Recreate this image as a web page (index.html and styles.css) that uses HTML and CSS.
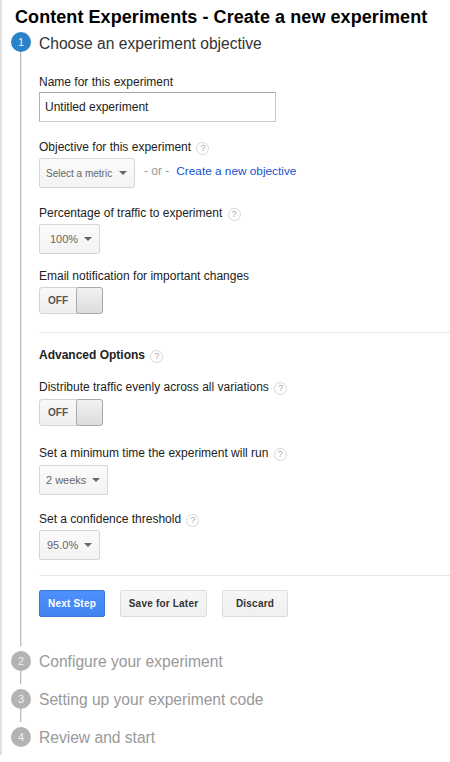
FILE: index.html
```html
<!DOCTYPE html>
<html lang="en">
<head>
<meta charset="utf-8">
<title>Content Experiments</title>
<link rel="stylesheet" href="styles.css">
</head>
<body>
<main class="page">
  <h1 class="title">Content Experiments - Create a new experiment</h1>
  <section class="step step-active">
    <div class="rail"><span class="num num-on">1</span><span class="line"></span></div>
    <div class="body">
      <h2 class="step-title">Choose an experiment objective</h2>
      <form class="form">
        <div class="field f-name">
          <label class="label">Name for this experiment</label>
          <input class="input" type="text" value="Untitled experiment">
        </div>
        <div class="field f-obj">
          <label class="label">Objective for this experiment <span class="help">?</span></label>
          <div class="row">
            <div class="select s-metric"><span>Select a metric</span><i class="caret"></i></div>
            <span class="or">- or -</span>
            <a class="link" href="#">Create a new objective</a>
          </div>
        </div>
        <div class="field f-pct">
          <label class="label">Percentage of traffic to experiment <span class="help">?</span></label>
          <div class="select s-pct"><span>100%</span><i class="caret"></i></div>
        </div>
        <div class="field f-email">
          <label class="label">Email notification for important changes</label>
          <div class="toggle"><span class="off">OFF</span><span class="knob"></span></div>
        </div>
        <hr class="rule rule-a">
        <h3 class="adv">Advanced Options <span class="help">?</span></h3>
        <div class="field f-dist">
          <label class="label">Distribute traffic evenly across all variations <span class="help">?</span></label>
          <div class="toggle"><span class="off">OFF</span><span class="knob"></span></div>
        </div>
        <div class="field f-min">
          <label class="label">Set a minimum time the experiment will run <span class="help">?</span></label>
          <div class="select s-weeks"><span>2 weeks</span><i class="caret"></i></div>
        </div>
        <div class="field f-conf">
          <label class="label">Set a confidence threshold <span class="help">?</span></label>
          <div class="select s-conf"><span>95.0%</span><i class="caret"></i></div>
        </div>
        <hr class="rule rule-b">
        <div class="buttons">
          <button class="btn btn-primary" type="button">Next Step</button>
          <button class="btn b-save" type="button">Save for Later</button>
          <button class="btn b-discard" type="button">Discard</button>
        </div>
      </form>
    </div>
  </section>
  <section class="step step-off">
    <div class="rail"><span class="num">2</span><span class="line"></span></div>
    <div class="body"><h2 class="step-title">Configure your experiment</h2></div>
  </section>
  <section class="step step-off">
    <div class="rail"><span class="num">3</span><span class="line"></span></div>
    <div class="body"><h2 class="step-title">Setting up your experiment code</h2></div>
  </section>
  <section class="step step-off">
    <div class="rail"><span class="num">4</span></div>
    <div class="body"><h2 class="step-title">Review and start</h2></div>
  </section>
</main>
</body>
</html>
```
FILE: styles.css
```css
* { box-sizing: border-box; }
html, body { margin: 0; padding: 0; background: #fff; }
body { font-family: "Liberation Sans", Arial, sans-serif; color: #222; width: 450px; height: 762px; overflow: hidden; }
.page { border-left: 2px solid #e2e2e2; height: 755px; padding-left: 9px; }
.title { margin: 0 0 0 4px; font-size: 18px; letter-spacing: 0.07px; line-height: 22px; padding-top: 6px; height: 32px; font-weight: bold; color: #000; }
.step { display: flex; }
.rail { width: 28px; flex: none; display: flex; flex-direction: column; align-items: flex-start; }
.num { width: 20px; height: 20px; border-radius: 50%; background: #b3b3b3; color: #f0f0f0; font-size: 11px; line-height: 20px; text-align: center; flex: none; }
.num-on { background: #2a82c8; color: #e6f1fa; }
.line { width: 1px; background: #bdbdbd; box-shadow: 1px 0 #e6e6e6; margin: 0 0 5px 9px; flex: 1; }
.body { flex: 1; min-width: 0; }
.step-title { margin: 0; font-size: 15.6px; line-height: 20px; font-weight: normal; padding-top: 1px; }
.step-active .step-title { color: #333; padding-top: 2px; }
.step-off { height: 38px; }
.step-off .step-title { color: #999; }
.label { display: block; font-size: 12px; line-height: 15px; color: #222; }
.f-name { padding-top: 21px; }
.f-obj { padding-top: 18px; }
.f-pct { padding-top: 18px; }
.f-email { padding-top: 15px; }
.f-dist { padding-top: 17px; }
.f-min { padding-top: 20px; }
.f-conf { padding-top: 17px; }
.input { display: block; width: 237px; height: 30px; margin-top: 2px; border: 1px solid #c8c8c8; border-top-color: #a4a4a4; border-left-color: #b0b0b0; padding: 0 5px; font: 12px "Liberation Sans", Arial, sans-serif; color: #222; background: #fff; border-radius: 0; }
.help { display: inline-block; width: 13px; height: 13px; margin-left: 2px; border: 1px solid #d8d8d8; border-radius: 50%; color: #aaa; font-size: 9px; font-weight: normal; line-height: 11px; text-align: center; vertical-align: 0; }
.row { display: flex; align-items: center; }
.row .or, .row .link { position: relative; top: -1px; }
.select { display: inline-flex; align-items: center; justify-content: space-between; height: 30px; margin-top: 3px; border: 1px solid #d6d6d6; border-radius: 2px; background: linear-gradient(#fbfbfb, #f3f3f3); color: #666; font-size: 11px; padding: 0 7px; }
.s-metric { width: 96px; padding-left: 6px; font-size: 10px; }
.s-pct { width: 61px; padding-left: 10px; }
.s-weeks { width: 69px; padding-left: 6px; margin-top: 4px; }
.s-conf { width: 61px; margin-top: 3px; }
.caret { width: 0; height: 0; border-left: 4px solid transparent; border-right: 4px solid transparent; border-top: 4px solid #666; flex: none; }
.or { margin-left: 9px; color: #999; font-size: 12px; }
.link { margin-left: 7px; color: #15c; text-decoration: none; font-size: 11.8px; }
.toggle { display: flex; width: 64px; height: 27px; margin-top: 3px; border: 1px solid #d2d2d2; border-radius: 3px; background: linear-gradient(#f8f8f8, #efefef); }
.f-dist .toggle { margin-top: 4px; }
.off { width: 36px; text-align: center; font-size: 10px; font-weight: bold; color: #555; line-height: 25px; }
.knob { flex: 1; margin: -1px -1px -1px 0; border: 1px solid #aaa; border-radius: 3px; background: linear-gradient(#f2f2f2, #dcdcdc); }
.rule { border: 0; margin: 0; height: 1px; background: #e8e8e8; }
.rule-a { margin-top: 18px; }
.adv { margin: 14px 0 0; font-size: 12px; line-height: 16px; font-weight: bold; color: #222; }
.rule-b { margin-top: 15px; }
.buttons { display: flex; gap: 15px; margin-top: 14px; height: 61px; }
.btn { height: 27px; font: bold 10px "Liberation Sans", Arial, sans-serif; letter-spacing: 0.2px; border: 1px solid #dcdcdc; border-radius: 2px; background: linear-gradient(#f6f6f6, #f0f0f0); color: #333; padding: 0; }
.btn-primary { width: 66px; background: linear-gradient(#4d90fe, #4285f0); border-color: #3a78e0; color: #fff; }
.b-save { width: 87px; }
.b-discard { width: 66px; }
```
